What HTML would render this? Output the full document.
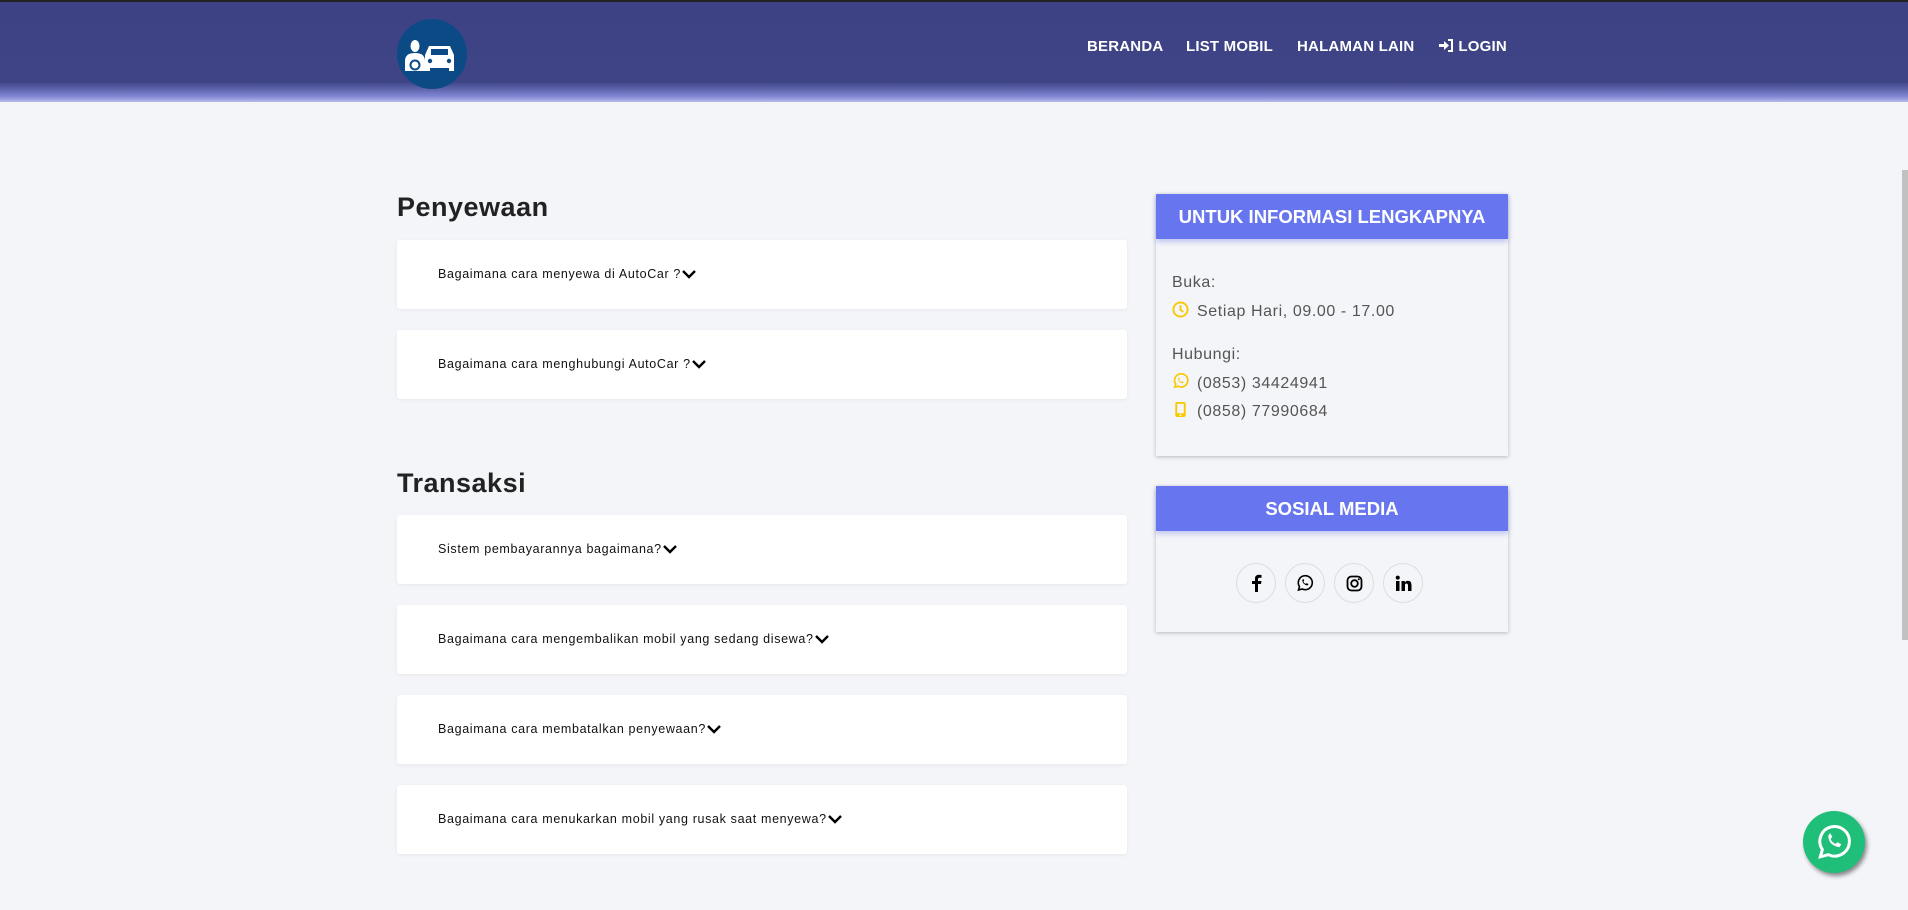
<!DOCTYPE html>
<html><head><meta charset="utf-8"><style>
*{box-sizing:border-box;margin:0;padding:0}
body{width:1908px;height:910px;overflow:hidden;background:#f4f5f9;font-family:"Liberation Sans",sans-serif;position:relative}
.hdr{position:absolute;left:0;top:0;width:1908px;height:102px;border-top:2px solid #222;background:linear-gradient(#3c4283 0,#3e4486 80px,#7e84d0 94px,#b5b9ee 100px,#f4f5f9 102px)}
.logo{position:absolute;left:397px;top:17px;width:70px;height:70px;border-radius:50%;background:#0b4a85}
.nav{position:absolute;top:36px;font-weight:bold;font-size:15px;color:#fff;letter-spacing:.2px}
h2{position:absolute;left:397px;font-size:27px;font-weight:bold;color:#222;letter-spacing:.5px}
.card{position:absolute;left:397px;width:730px;height:69px;background:#fff;border-radius:3px;box-shadow:0 1px 3px rgba(0,0,0,.06);font-size:12.5px;color:#111;padding-left:41px;line-height:69px;letter-spacing:.65px}
.card svg{vertical-align:middle;margin-left:1px}
.panel{position:absolute;left:1156px;width:352px;background:#f4f5f9;box-shadow:0 1px 4px rgba(0,0,0,.25)}
.ph{height:45px;background:#6776ee;color:#fff;font-weight:bold;font-size:18.5px;text-align:center;line-height:45px;letter-spacing:0;box-shadow:0 3px 5px rgba(100,110,230,.35)}
.t{position:absolute;left:16px;font-size:16px;color:#555;letter-spacing:.6px}
.soc{position:absolute;top:563px;width:40px;height:40px;border-radius:50%;border:1px solid #ddd;display:flex;align-items:center;justify-content:center}
</style></head><body>
<div class="hdr">
<div class="logo"><svg width="70" height="70" viewBox="0 0 70 70"><ellipse cx="18" cy="27" rx="4.5" ry="6" fill="#fff"/><path d="M8 52v-10q0-8 10-8t10 8v10z" fill="#fff"/><circle cx="18" cy="46" r="4.5" fill="none" stroke="#0b4a85" stroke-width="2"/><path d="M28 52v-16l4-9h21l4 9v16h-5v-3h-19v3z" fill="#fff"/><rect x="34" y="30" width="17" height="6" fill="#0b4a85"/><circle cx="33" cy="42" r="2.2" fill="#0b4a85"/><circle cx="52" cy="42" r="2.2" fill="#0b4a85"/></svg></div>
<div class="nav" style="left:1087px">BERANDA</div>
<div class="nav" style="left:1186px">LIST MOBIL</div>
<div class="nav" style="left:1297px">HALAMAN LAIN</div>
<div class="nav" style="left:1439px"><svg width="15" height="13" viewBox="0 0 15 13" style="vertical-align:-1px"><path d="M0 5h5V2l5 4.5L5 11V8H0z" fill="#fff"/><path d="M9 1h4v11H9" fill="none" stroke="#fff" stroke-width="2"/></svg> LOGIN</div>
</div>
<div style="position:absolute;right:0;top:170px;width:6px;height:470px;background:#c1c1c1"></div>
<h2 style="top:192px">Penyewaan</h2>
<div class="card" style="top:240px">Bagaimana cara menyewa di AutoCar ?<svg width="14" height="9" viewBox="0 0 14 9"><path d="M1 1l6 6 6-6" fill="none" stroke="#000" stroke-width="2.4"/></svg></div>
<div class="card" style="top:330px">Bagaimana cara menghubungi AutoCar ?<svg width="14" height="9" viewBox="0 0 14 9"><path d="M1 1l6 6 6-6" fill="none" stroke="#000" stroke-width="2.4"/></svg></div>
<h2 style="top:468px">Transaksi</h2>
<div class="card" style="top:515px">Sistem pembayarannya bagaimana?<svg width="14" height="9" viewBox="0 0 14 9"><path d="M1 1l6 6 6-6" fill="none" stroke="#000" stroke-width="2.4"/></svg></div>
<div class="card" style="top:605px">Bagaimana cara mengembalikan mobil yang sedang disewa?<svg width="14" height="9" viewBox="0 0 14 9"><path d="M1 1l6 6 6-6" fill="none" stroke="#000" stroke-width="2.4"/></svg></div>
<div class="card" style="top:695px">Bagaimana cara membatalkan penyewaan?<svg width="14" height="9" viewBox="0 0 14 9"><path d="M1 1l6 6 6-6" fill="none" stroke="#000" stroke-width="2.4"/></svg></div>
<div class="card" style="top:785px">Bagaimana cara menukarkan mobil yang rusak saat menyewa?<svg width="14" height="9" viewBox="0 0 14 9"><path d="M1 1l6 6 6-6" fill="none" stroke="#000" stroke-width="2.4"/></svg></div>

<div class="panel" style="top:194px;height:262px">
<div class="ph">UNTUK INFORMASI LENGKAPNYA</div>
<div class="t" style="top:80px">Buka:</div>
<div class="t" style="top:107px"><svg width="17" height="17" viewBox="0 0 18 18" style="vertical-align:-2px;margin-right:8px"><circle cx="9" cy="9" r="7.5" fill="none" stroke="#f9c900" stroke-width="2"/><path d="M9 4.5v5l3 2" fill="none" stroke="#f9c900" stroke-width="2"/></svg>Setiap Hari, 09.00 - 17.00</div>
<div class="t" style="top:152px">Hubungi:</div>
<div class="t" style="top:179px"><svg width="17" height="17" viewBox="0 0 18 18" style="vertical-align:-2px;margin-right:8px"><path d="M3 15l1-3.2A7 7 0 1 1 6.5 14z" fill="none" stroke="#f9c900" stroke-width="1.8"/><path d="M6.5 6q0 4 5 5l1-1.3-1.8-1-1 .8q-1.7-.8-2.2-2.2l.8-1-1-1.8z" fill="#f9c900"/></svg>(0853) 34424941</div>
<div class="t" style="top:207px"><svg width="17" height="17" viewBox="0 0 18 18" style="vertical-align:-2px;margin-right:8px"><rect x="3.5" y="1" width="11" height="16" rx="2" fill="#f9c900"/><rect x="5.5" y="3" width="7" height="10" fill="#f4f5f9"/><circle cx="9" cy="15" r="1" fill="#f4f5f9"/></svg>(0858) 77990684</div>
</div>
<div class="panel" style="top:486px;height:146px">
<div class="ph">SOSIAL MEDIA</div>
</div>
<div class="soc" style="left:1236px"><svg width="12" height="18" viewBox="0 0 12 18"><path d="M8 18V10h3l.5-3H8V5q0-1.3 1.5-1.3H11.5V1Q10 .8 9 .8 5 .8 5 4.6V7H2v3h3v8z" fill="#000"/></svg></div>
<div class="soc" style="left:1285px"><svg width="18" height="18" viewBox="0 0 18 18"><path d="M2.5 16l1-3.4A7 7 0 1 1 6.3 15z" fill="none" stroke="#000" stroke-width="1.6"/><path d="M6.3 6q0 4.5 5.2 5.5l1-1.4-1.8-1-1 .8q-1.8-.8-2.3-2.3l.8-1-1-1.8z" fill="#000"/></svg></div>
<div class="soc" style="left:1334px"><svg width="17" height="17" viewBox="0 0 17 17"><rect x="1.5" y="1.5" width="14" height="14" rx="4" fill="none" stroke="#000" stroke-width="1.8"/><circle cx="8.5" cy="8.5" r="3.3" fill="none" stroke="#000" stroke-width="1.8"/><circle cx="12.8" cy="4.2" r="1" fill="#000"/></svg></div>
<div class="soc" style="left:1383px"><svg width="17" height="17" viewBox="0 0 17 17"><rect x="1" y="6" width="3.5" height="10" fill="#000"/><circle cx="2.75" cy="2.6" r="2" fill="#000"/><path d="M6.5 6h3.3v1.5Q11 5.7 13 5.7q3.5 0 3.5 4.3V16H13v-5.5q0-2-1.6-2T10 10.6V16H6.5z" fill="#000"/></svg></div>

<div style="position:absolute;left:1803px;top:811px;width:62px;height:62px;border-radius:50%;background:#1fbf7a;box-shadow:2px 3px 4px rgba(0,0,0,.45);display:flex;align-items:center;justify-content:center"><svg width="38" height="38" viewBox="0 0 18 18"><path d="M2.5 16l1-3.4A7 7 0 1 1 6.3 15z" fill="none" stroke="#fff" stroke-width="1.4"/><path d="M6.3 6q0 4.5 5.2 5.5l1-1.4-1.8-1-1 .8q-1.8-.8-2.3-2.3l.8-1-1-1.8z" fill="#fff"/></svg></div>
</body></html>
